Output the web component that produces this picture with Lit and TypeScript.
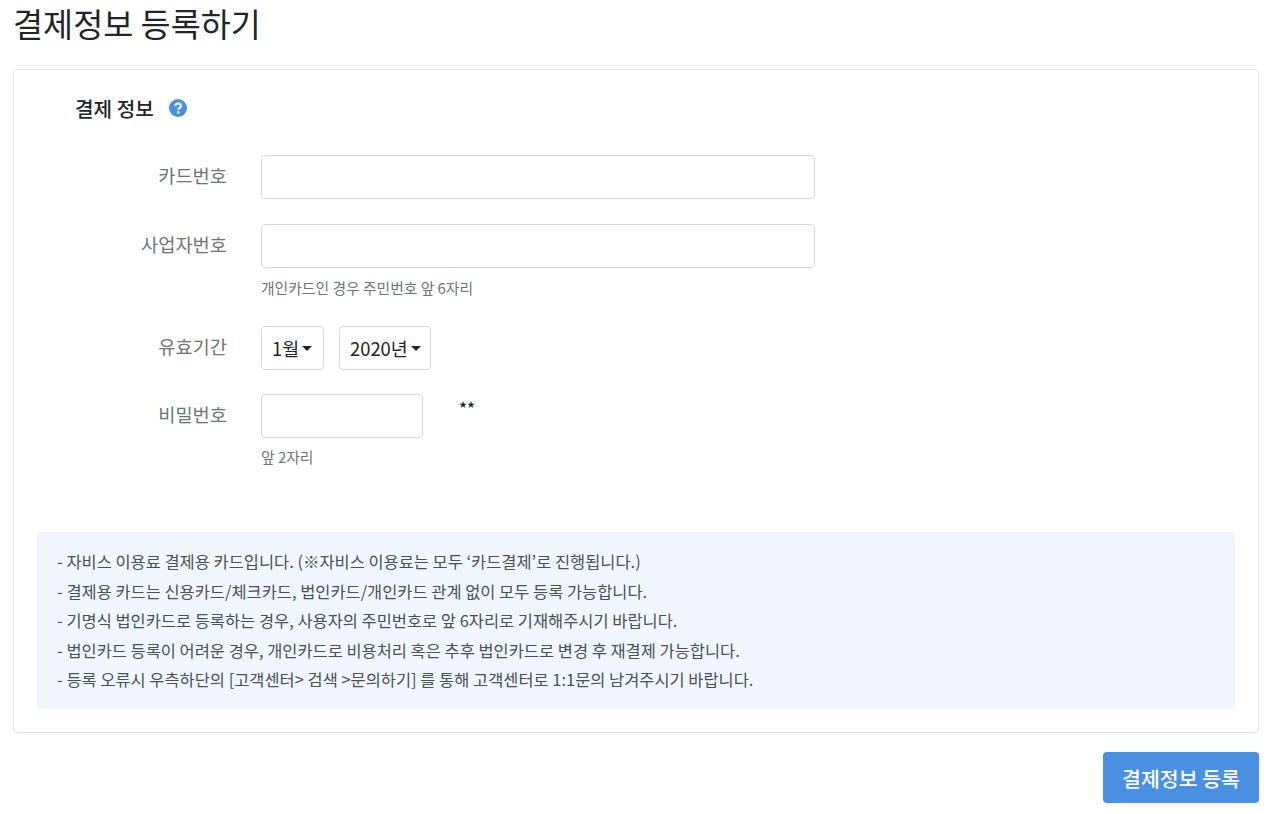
import { LitElement, html, css } from "lit";
import { customElement } from "lit/decorators.js";

const NOTES = [
  "- 자비스 이용료 결제용 카드입니다. (※자비스 이용료는 모두 ‘카드결제’로 진행됩니다.)",
  "- 결제용 카드는 신용카드/체크카드, 법인카드/개인카드 관계 없이 모두 등록 가능합니다.",
  "- 기명식 법인카드로 등록하는 경우, 사용자의 주민번호로 앞 6자리로 기재해주시기 바랍니다.",
  "- 법인카드 등록이 어려운 경우, 개인카드로 비용처리 혹은 추후 법인카드로 변경 후 재결제 가능합니다.",
  "- 등록 오류시 우측하단의 [고객센터> 검색 >문의하기] 를 통해 고객센터로 1:1문의 남겨주시기 바랍니다.",
];

@customElement("app-root")
export class AppRoot extends LitElement {
  static styles = css`
    :host {
      display: block;
      width: 1280px;
      height: 814px;
      overflow: hidden;
      box-sizing: border-box;
      padding: 0 21px 0 13px;
      background: #fff;
      color: #212529;
      font-family: "Noto Sans CJK KR", "Noto Sans", sans-serif;
    }
    h1 {
      margin: 0;
      height: 69px;
      font-size: 32.7px;
      font-weight: 400;
      line-height: 46px;
      color: #212529;
    }
    .card {
      box-sizing: border-box;
      height: 664px;
      border: 1px solid #e3e3e3;
      border-radius: 4px;
      padding: 0 23px;
      display: flex;
      flex-direction: column;
    }
    .title {
      display: flex;
      align-items: center;
      gap: 15px;
      height: 28px;
      margin: 24px 0 0 38px;
      font-size: 20.2px;
      font-weight: 500;
    }
    .title svg { display: block; }
    .form {
      display: flex;
      flex-direction: column;
      margin-top: 33px;
    }
    .row {
      display: grid;
      grid-template-columns: 190px 1fr;
      column-gap: 34px;
    }
    .row-card { margin-bottom: 25px; }
    .row-biz { margin-bottom: 28px; }
    .row-date { margin-bottom: 24px; }
    .label {
      font-size: 18.7px;
      line-height: 40px;
      text-align: right;
      color: #6c757d;
    }
    .box {
      box-sizing: border-box;
      height: 44px;
      border: 1px solid #d3d9e0;
      border-radius: 4px;
      background: #fff;
    }
    .wide { width: 554px; }
    .short { width: 162px; }
    .help {
      font-size: 14.8px;
      line-height: 20px;
      margin-top: 9px;
      color: #6c757d;
    }
    .help-biz { margin-top: 10px; }
    .selects { display: flex; gap: 15px; }
    .select {
      display: flex;
      align-items: center;
      gap: 3px;
      padding: 0 0 0 10px;
      font-size: 18.4px;
      color: #212529;
    }
    .month { width: 63px; }
    .year { width: 92px; }
    .caret {
      width: 0;
      height: 0;
      border-left: 5px solid transparent;
      border-right: 5px solid transparent;
      border-top: 5px solid #212529;
    }
    .pw { display: flex; align-items: flex-start; gap: 36px; }
    .stars { font-size: 8px; line-height: 20px; }
    .notes {
      box-sizing: border-box;
      height: 177px;
      margin-top: 65px;
      padding: 15px 20px;
      background: #f1f6fd;
      font-size: 16.45px;
      line-height: 29.5px;
      color: #495057;
    }
    .actions { display: flex; justify-content: flex-end; margin-top: 19px; }
    button {
      width: 156px;
      height: 51px;
      border: 0;
      border-radius: 4px;
      background: #4a90e2;
      color: #fff;
      font: 500 20.5px "Noto Sans CJK KR", "Noto Sans", sans-serif;
    }
  `;

  render() {
    return html`
      <h1>결제정보 등록하기</h1>
      <section class="card">
        <div class="title">
          <span>결제 정보</span>
          <svg width="18" height="18" viewBox="0 0 18 18" aria-hidden="true">
            <circle cx="9" cy="9" r="9" fill="#4a90e2"></circle>
            <path d="M6.3 7.1C6.3 5.5 7.5 4.5 9.1 4.5c1.6 0 2.8 1 2.8 2.4 0 2-2.5 2-2.5 3.9" fill="none" stroke="#fff" stroke-width="2"></path>
            <circle cx="9.3" cy="13.4" r="1.3" fill="#fff"></circle>
          </svg>
        </div>
        <div class="form">
          <div class="row row-card">
            <div class="label">카드번호</div>
            <div class="box wide"></div>
          </div>
          <div class="row row-biz">
            <div class="label">사업자번호</div>
            <div>
              <div class="box wide"></div>
              <div class="help help-biz">개인카드인 경우 주민번호 앞 6자리</div>
            </div>
          </div>
          <div class="row row-date">
            <div class="label">유효기간</div>
            <div class="selects">
              <div class="box select month">1월<span class="caret"></span></div>
              <div class="box select year">2020년<span class="caret"></span></div>
            </div>
          </div>
          <div class="row">
            <div class="label">비밀번호</div>
            <div>
              <div class="pw">
                <div class="box short"></div>
                <div class="stars">★★</div>
              </div>
              <div class="help">앞 2자리</div>
            </div>
          </div>
        </div>
        <div class="notes">
          ${NOTES.map((n) => html`<div>${n}</div>`)}
        </div>
      </section>
      <div class="actions"><button>결제정보 등록</button></div>
    `;
  }
}
